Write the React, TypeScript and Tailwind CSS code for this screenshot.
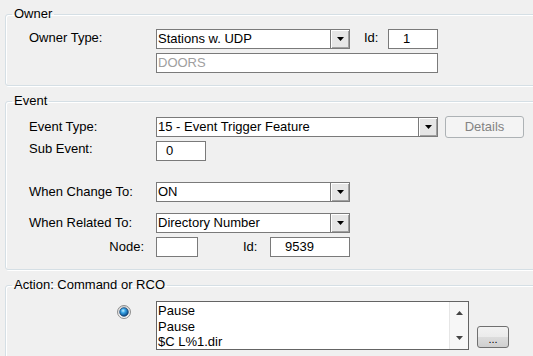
import React from "react";

const Arrow = () => (
  <svg width="7" height="4" viewBox="0 0 7 4">
    <path d="M0 0 H7 L3.5 4 Z" fill="#000" />
  </svg>
);

const Select = ({ value, w }: { value: string; w: string }) => (
  <div className={`flex h-[20px] ${w} border border-[#7a7a7a] bg-white`}>
    <div className="flex-1 pl-[1px] leading-[18px] whitespace-nowrap overflow-hidden">{value}</div>
    <div className="-my-px -mr-px flex h-[20px] w-[20px] items-center justify-center border border-[#7a7a7a] bg-[#e6e6e6] shadow-[inset_1px_1px_0_#ffffff,inset_-1px_-1px_0_#a0a0a0]">
      <Arrow />
    </div>
  </div>
);

const Input = ({ value, w, cls = "" }: { value: string; w: string; cls?: string }) => (
  <div className={`h-[20px] ${w} border border-[#7a7a7a] bg-white leading-[18px] whitespace-nowrap ${cls}`}>{value}</div>
);

const Legend = ({ children }: { children: React.ReactNode }) => (
  <legend className="ml-[6px] px-[2px] leading-[16px]">{children}</legend>
);

const fs =
  "w-[560px] ml-[5px] rounded-[3px] border border-[#d5dfe5] shadow-[inset_1px_1px_0_#ffffff,1px_1px_0_#ffffff]";

export default function App() {
  return (
    <div className="w-[533px] h-[356px] overflow-hidden bg-[#f0f0f0] font-['Liberation_Sans',Arial,sans-serif] text-[13px] text-black">
      {/* Owner */}
      <fieldset className={`${fs} mt-[6px]`}>
        <Legend>Owner</Legend>
        <div className="pl-[23px] pt-[7px] pb-[12px] flex flex-col gap-[4px]">
          <div className="flex items-center">
            <div className="w-[127px] -mt-[2px]">Owner Type:</div>
            <Select value="Stations w. UDP" w="w-[194px]" />
            <div className="ml-[14px] w-[24px] -mt-[2px]">Id:</div>
            <Input value="1" w="w-[50px]" cls="pl-[14px]" />
          </div>
          <div className="flex items-center">
            <div className="w-[127px]" />
            <Input value="DOORS" w="w-[282px]" cls="pl-[1px] text-[#a0a0a0]" />
          </div>
        </div>
      </fieldset>

      {/* Event */}
      <fieldset className={`${fs} mt-[7px]`}>
        <Legend>Event</Legend>
        <div className="pl-[23px] pt-[7px] pb-[12px] flex flex-col">
          <div className="flex items-center h-[22px]">
            <div className="w-[127px]">Event Type:</div>
            <Select value="15 - Event Trigger Feature" w="w-[282px]" />
            <div className="ml-[7px] flex h-[22px] w-[79px] items-center justify-center rounded-[3px] border border-[#adb2b5] bg-[#f4f4f4] text-[#838383]">
              Details
            </div>
          </div>
          <div className="flex items-start mt-[3px]">
            <div className="w-[127px] leading-[16px]">Sub Event:</div>
            <Input value="0" w="w-[50px]" cls="pl-[9px]" />
          </div>
          <div className="flex items-center mt-[21px]">
            <div className="w-[127px]">When Change To:</div>
            <Select value="ON" w="w-[194px]" />
          </div>
          <div className="flex items-center mt-[11px]">
            <div className="w-[127px]">When Related To:</div>
            <Select value="Directory Number" w="w-[194px]" />
          </div>
          <div className="flex items-center mt-[4px]">
            <div className="w-[127px] pr-[12px] text-right">Node:</div>
            <Input value="" w="w-[42px]" />
            <div className="ml-[45px] w-[27px]">Id:</div>
            <Input value="9539" w="w-[80px]" cls="pl-[14px]" />
          </div>
        </div>
      </fieldset>

      {/* Action */}
      <fieldset className={`${fs} mt-[7px]`}>
        <Legend>Action: Command or RCO</Legend>
        <div className="pl-[23px] pt-[8px] pb-[12px] flex items-start">
          <div className="w-[127px] flex">
            <div className="ml-[88px] mt-[4px]">
              <svg width="14" height="14" viewBox="0 0 14 14">
                <defs>
                  <linearGradient id="ring" x1="0" y1="0" x2="0" y2="1">
                    <stop offset="0" stopColor="#d0d0d0" />
                    <stop offset="1" stopColor="#fbfbfb" />
                  </linearGradient>
                  <radialGradient id="dot" cx="0.4" cy="0.35" r="0.7">
                    <stop offset="0" stopColor="#c4f0ff" />
                    <stop offset="0.35" stopColor="#3aa6e8" />
                    <stop offset="0.8" stopColor="#145d9c" />
                    <stop offset="1" stopColor="#0c3f70" />
                  </radialGradient>
                </defs>
                <circle cx="7" cy="7" r="6.5" fill="url(#ring)" stroke="#8f8f8f" strokeWidth="1" />
                <circle cx="7" cy="7" r="4.3" fill="url(#dot)" stroke="#0f3a66" strokeWidth="0.7" />
              </svg>
            </div>
          </div>
          <div className="flex h-[49px] w-[313px] border border-[#646464] bg-white">
            <div className="flex-1 pl-[1px] pt-[1px] leading-[15.5px]">
              <div>Pause</div>
              <div>Pause</div>
              <div>$C L%1.dir</div>
            </div>
            <div className="w-[19px] flex flex-col items-center justify-between py-[9px] bg-[#f7f7f7] border-l border-[#e6e6e6]">
              <svg width="7" height="4" viewBox="0 0 7 4">
                <path d="M3.5 0 L7 4 H0 Z" fill="#444" />
              </svg>
              <svg width="7" height="4" viewBox="0 0 7 4">
                <path d="M0 0 H7 L3.5 4 Z" fill="#444" />
              </svg>
            </div>
          </div>
          <div className="ml-[8px] mt-[25px] relative h-[22px] w-[32px] overflow-hidden rounded-[3px] border border-[#707070] flex items-center justify-center bg-[linear-gradient(#f2f2f2_0%,#ebebeb_50%,#dddddd_50%,#cfcfcf_100%)] text-[11px] leading-none">
            <span className="pt-[4px]">...</span>
          </div>
        </div>
      </fieldset>
    </div>
  );
}
